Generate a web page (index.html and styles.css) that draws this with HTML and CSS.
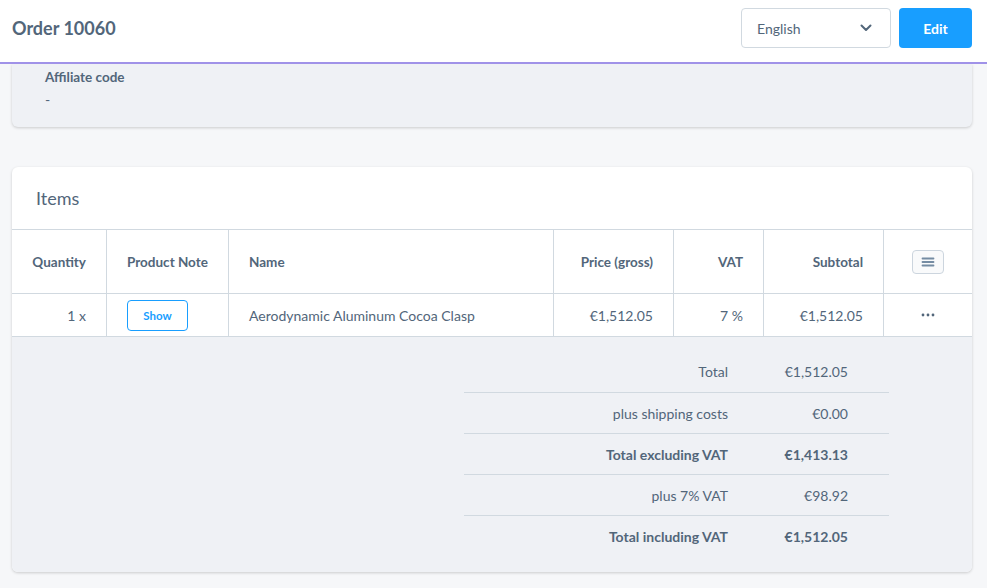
FILE: index.html
```html
<!DOCTYPE html>
<html lang="en">
<head>
<meta charset="utf-8">
<title>Order 10060</title>
<link rel="stylesheet" href="styles.css">
</head>
<body>
<header class="topbar">
  <h1 class="title">Order 10060</h1>
  <div class="actions">
    <div class="lang-select">
      <span>English</span>
      <svg class="chevron" width="12" height="8" viewBox="0 0 12 8"><path d="M1.5 1.5 L6 6 L10.5 1.5" fill="none" stroke="#52667a" stroke-width="2" stroke-linecap="round" stroke-linejoin="round"/></svg>
    </div>
    <button class="btn-edit">Edit</button>
  </div>
</header>

<main class="content">
  <section class="card card-affiliate">
    <div class="field-label">Affiliate code</div>
    <div class="field-value">-</div>
  </section>

  <section class="card card-items">
    <div class="card-header">Items</div>
    <div class="grid">
      <div class="cell th right">Quantity</div>
      <div class="cell th">Product Note</div>
      <div class="cell th">Name</div>
      <div class="cell th right">Price (gross)</div>
      <div class="cell th right">VAT</div>
      <div class="cell th right">Subtotal</div>
      <div class="cell th center last">
        <button class="menu-btn" aria-label="Columns">
          <svg width="14" height="12" viewBox="0 0 14 12"><path d="M1.5 2.5H12.5M1.5 6H12.5M1.5 9.5H12.5" stroke="#758ca3" stroke-width="1.8" stroke-linecap="round"/></svg>
        </button>
      </div>

      <div class="cell td right">1 x</div>
      <div class="cell td"><button class="btn-show">Show</button></div>
      <div class="cell td">Aerodynamic Aluminum Cocoa Clasp</div>
      <div class="cell td right">€1,512.05</div>
      <div class="cell td right">7 %</div>
      <div class="cell td right">€1,512.05</div>
      <div class="cell td center last">
        <svg width="14" height="4" viewBox="0 0 14 4"><circle cx="2" cy="2" r="1.4" fill="#52667a"/><circle cx="7" cy="2" r="1.4" fill="#52667a"/><circle cx="12" cy="2" r="1.4" fill="#52667a"/></svg>
      </div>
    </div>

    <div class="summary">
      <dl class="totals">
        <dt>Total</dt><dd>€1,512.05</dd>
        <dt>plus shipping costs</dt><dd>€0.00</dd>
        <dt class="strong">Total excluding VAT</dt><dd class="strong">€1,413.13</dd>
        <dt>plus 7% VAT</dt><dd>€98.92</dd>
        <dt class="strong">Total including VAT</dt><dd class="strong">€1,512.05</dd>
      </dl>
    </div>
  </section>
</main>
</body>
</html>
```

FILE: styles.css
```css
* { box-sizing: border-box; }
html, body { margin: 0; padding: 0; }
body {
  font-family: Lato, "Liberation Sans", sans-serif;
  color: #52667a;
  background: #f6f7f9;
  width: 987px;
  height: 588px;
  overflow: hidden;
}

.topbar {
  height: 64px;
  background: #fff;
  border-bottom: 2px solid #a092e8;
  display: flex;
  align-items: flex-start;
  justify-content: space-between;
  padding: 8px 15px 0 12px;
  position: relative;
  z-index: 2;
}
.title {
  margin: 0;
  font-size: 18px;
  font-weight: 700;
  line-height: 40px;
  color: #52667a;
}
.actions { display: flex; gap: 8px; }
.lang-select {
  width: 150px;
  height: 40px;
  border: 1px solid #d1d9e0;
  border-radius: 4px;
  background: #fff;
  display: flex;
  align-items: center;
  justify-content: space-between;
  padding: 0 18px 0 15px;
  font-size: 14px;
}
.btn-edit {
  width: 73px;
  height: 40px;
  border: 0;
  border-radius: 4px;
  background: #189eff;
  color: #fff;
  font-family: inherit;
  font-size: 14px;
  font-weight: 700;
}

.content {
  padding: 0 15px 0 12px;
}
.card {
  background: #fff;
  border-radius: 6px;
  box-shadow: 0 1px 3px rgba(0, 0, 0, 0.18);
}
.card-affiliate {
  background: #eff1f5;
  border-radius: 0 0 6px 6px;
  padding: 3px 33px 17px;
  margin-bottom: 40px;
}
.field-label {
  font-size: 13.5px;
  font-weight: 700;
  line-height: 20px;
}
.field-value {
  font-size: 14px;
  line-height: 20px;
  margin-top: 3px;
}

.card-items { overflow: hidden; }
.card-header {
  height: 63px;
  padding: 0 24px;
  display: flex;
  align-items: center;
  font-size: 18px;
  font-weight: 400;
  border-bottom: 1px solid #d1d9e0;
}
.grid {
  display: grid;
  grid-template-columns: 95px 122px 325px 120px 90px 120px 88px;
  grid-template-rows: 64px 43px;
  font-size: 14px;
}
.cell {
  display: flex;
  align-items: center;
  padding: 0 20px 0 20px;
  border-right: 1px solid #d1d9e0;
  border-bottom: 1px solid #d1d9e0;
  background: #fff;
  white-space: nowrap;
}
.cell.last { border-right: 0; }
.cell.right { justify-content: flex-end; }
.cell.center { justify-content: center; padding: 0; }
.th { font-weight: 700; font-size: 13.5px; }
.td { font-weight: 400; }

.menu-btn {
  width: 32px;
  height: 24px;
  border: 1px solid #ccd5de;
  border-radius: 4px;
  background: #f9fafb;
  padding: 0;
  display: flex;
  align-items: center;
  justify-content: center;
}
.btn-show {
  width: 61px;
  height: 31px;
  border: 1px solid #189eff;
  border-radius: 4px;
  background: #fff;
  color: #189eff;
  font-family: inherit;
  font-size: 11.5px;
  font-weight: 700;
  padding: 0;
}

.summary {
  background: #eff1f5;
  padding: 14px 83px 16px 0;
}
.totals {
  margin: 0 0 0 auto;
  width: 425px;
  display: grid;
  grid-template-columns: 1fr 161px;
  font-size: 14px;
}
.totals dt, .totals dd {
  margin: 0;
  height: 41px;
  display: flex;
  align-items: center;
  justify-content: flex-end;
  border-top: 1px solid #d1d9e0;
}
.totals dd { padding-right: 41px; }
.totals dt:first-of-type, .totals dd:first-of-type { border-top: 0; }
.totals .strong { font-weight: 700; }
```
